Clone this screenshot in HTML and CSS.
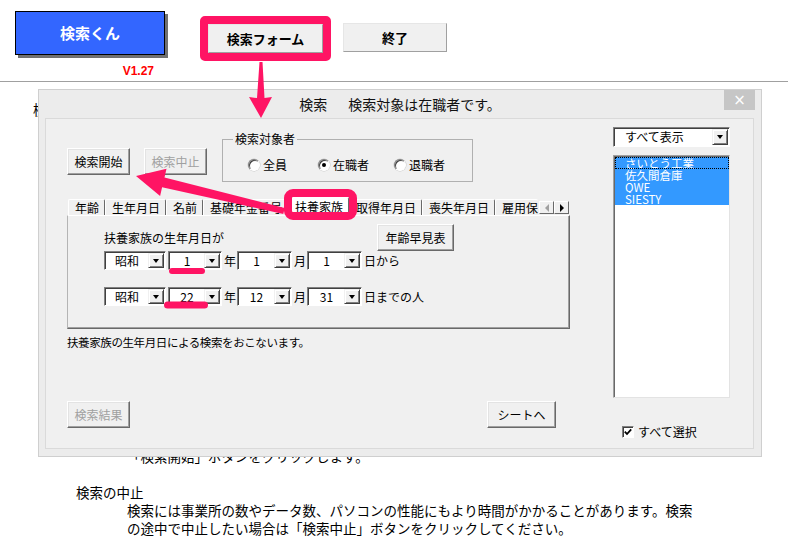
FILE: index.html
```html
<!DOCTYPE html>
<html lang="ja">
<head>
    <meta charset="UTF-8">
    <meta name="viewport" content="width=device-width, initial-scale=1.0">
    <title>検索くん</title>
    <link rel="stylesheet" href="styles.css">
</head>
<body>
    <header class="toolbar">
        <div class="brand">
            <div class="brand-btn">検索くん</div>
            <div class="version">V1.27</div>
        </div>
        <div class="mark-box"><button class="sheet-btn form-btn">検索フォーム</button></div>
        <button class="sheet-btn quit-btn">終了</button>
    </header>
    <hr class="rule">

    <main class="doc">
        <p class="doc-title">検索くんの使い方</p>
        <p class="doc-text doc-start">「検索開始」ボタンをクリックします。</p>
        <section class="doc-sec">
            <p class="doc-head">検索の中止</p>
            <p class="doc-text">検索には事業所の数やデータ数、パソコンの性能にもより時間がかかることがあります。検索<br>の途中で中止したい場合は「検索中止」ボタンをクリックしてください。</p>
        </section>
    </main>

    <div class="dialog">
        <div class="dlg-title">
            <span></span>
            <span class="dlg-caption">検索<span class="dlg-msg">検索対象は在職者です。</span></span>
            <button class="dlg-close">×</button>
        </div>
        <div class="dlg-client">
            <div class="dlg-main">
                <div class="top-row">
                    <button class="btn">検索開始</button>
                    <button class="btn" disabled>検索中止</button>
                    <div class="group">
                        <span class="group-label">検索対象者</span>
                        <label class="radio"><span class="radio-dot"></span>全員</label>
                        <label class="radio"><span class="radio-dot on"></span>在職者</label>
                        <label class="radio"><span class="radio-dot"></span>退職者</label>
                    </div>
                </div>

                <div class="tabs">
                    <div class="tab-list">
                        <span class="tab">年齢</span>
                        <span class="tab">生年月日</span>
                        <span class="tab">名前</span>
                        <span class="tab">基礎年金番号</span>
                        <span class="tab active">扶養家族</span>
                        <span class="tab">取得年月日</span>
                        <span class="tab">喪失年月日</span>
                        <span class="tab last">雇用保</span>
                    </div>
                    <div class="tab-scroll">
                        <span class="scroll-btn"><i class="tri-left"></i></span>
                        <span class="scroll-btn"><i class="tri-right"></i></span>
                    </div>
                </div>

                <div class="tab-panel">
                    <div class="panel-row">
                        <span>扶養家族の生年月日が</span>
                        <button class="btn wide">年齢早見表</button>
                    </div>
                    <div class="date-row">
                        <span class="combo era"><span class="combo-val">昭和</span><span class="combo-btn"></span></span>
                        <span class="combo year"><span class="combo-val">1</span><span class="combo-btn"></span></span>
                        <span class="unit">年</span>
                        <span class="combo"><span class="combo-val">1</span><span class="combo-btn"></span></span>
                        <span class="unit">月</span>
                        <span class="combo"><span class="combo-val">1</span><span class="combo-btn"></span></span>
                        <span class="unit">日から</span>
                    </div>
                    <div class="date-row">
                        <span class="combo era"><span class="combo-val">昭和</span><span class="combo-btn"></span></span>
                        <span class="combo year"><span class="combo-val">22</span><span class="combo-btn"></span></span>
                        <span class="unit">年</span>
                        <span class="combo"><span class="combo-val">12</span><span class="combo-btn"></span></span>
                        <span class="unit">月</span>
                        <span class="combo"><span class="combo-val">31</span><span class="combo-btn"></span></span>
                        <span class="unit">日までの人</span>
                    </div>
                </div>

                <p class="dlg-note">扶養家族の生年月日による検索をおこないます。</p>

                <div class="bottom-row">
                    <button class="btn" disabled>検索結果</button>
                    <button class="btn sheet">シートへ</button>
                </div>
            </div>

            <div class="dlg-side">
                <span class="combo side-combo"><span class="combo-val">すべて表示</span><span class="combo-btn"></span></span>
                <div class="listbox">
                    <div class="list-item focus">さいとう工業</div>
                    <div class="list-item">佐久間倉庫</div>
                    <div class="list-item">QWE</div>
                    <div class="list-item">SIESTY</div>
                </div>
                <label class="check-row">
                    <span class="check"><svg width="8" height="8" viewBox="0 0 8 8"><polyline points="0.8,3.6 3,6 7.2,1.4" fill="none" stroke="#000" stroke-width="1.8"/></svg></span>
                    すべて選択
                </label>
            </div>
        </div>
    </div>

    <!-- 説明用の矢印と枠 -->
    <svg class="marks" width="788" height="538" viewBox="0 0 788 538">
        <polygon points="259.5,62 262.5,62 264.5,98 272,97 261,118 249,97 257,98" fill="#ff1464"/>
        <polygon points="136,176 166.5,168.8 164.5,177.6 284.7,208.1 283.3,213.9 162.1,187.3 160.1,196" fill="#ff1464"/>
        <rect x="288" y="193" width="65" height="23" rx="5" fill="none" stroke="#ff1464" stroke-width="8"/>
        <rect x="169" y="268" width="36" height="6" rx="3" fill="#ff1464"/>
        <rect x="164" y="301.5" width="44" height="7" rx="3.5" fill="#ff1464"/>
    </svg>
</body>
</html>
```

FILE: styles.css
```css
* {
    box-sizing: border-box;
}

body {
    margin: 0;
    width: 788px;
    height: 538px;
    overflow: hidden;
    position: relative;
    background: #fff;
    color: #000;
    font-family: "Noto Sans CJK JP", "Noto Sans", sans-serif;
}

button {
    font-family: inherit;
    padding: 0;
}

/* 上のツールバー */
.toolbar {
    display: flex;
    align-items: flex-start;
    height: 81px;
    padding: 11px 0 0 15px;
}

.brand {
    width: 150px;
    display: flex;
    flex-direction: column;
    align-items: flex-end;
}

.brand-btn {
    width: 150px;
    height: 44px;
    background: #3366ff;
    border: 1px solid #000;
    box-shadow: 3px 3px 0 #707070;
    color: #fff;
    font-size: 15px;
    font-weight: bold;
    line-height: 42px;
    text-align: center;
}

.version {
    margin: 9px 11px 0 0;
    color: #f00;
    font: bold 12px/14px "Liberation Sans", Arial, sans-serif;
}

.mark-box {
    margin: 5px 0 0 35px;
    border: 8px solid #ff1464;
    border-radius: 5px;
}

.sheet-btn {
    height: 29px;
    background: #f0f0f0;
    border: 1px solid;
    border-color: #e6e6e6 #a0a0a0 #a0a0a0 #e6e6e6;
    font-size: 13px;
    font-weight: bold;
    line-height: 1;
    color: #000;
}

.form-btn {
    display: block;
    width: 115px;
}

.quit-btn {
    width: 104px;
    margin: 12px 0 0 12px;
}

.rule {
    margin: 0;
    border: 0;
    border-top: 1px solid #a0a0a0;
}

/* 背面の説明文 */
.doc {
    padding: 18px 0 0 33px;
    font-size: 13.5px;
    line-height: 18px;
}

.doc p {
    margin: 0;
}

.doc-start {
    margin-top: 329px !important;
}

.doc-sec {
    margin-top: 18px;
}

.doc-head {
    padding-left: 43px;
}

.doc-text {
    padding-left: 94px;
    white-space: nowrap;
}

/* ダイアログ */
.dialog {
    position: absolute;
    left: 38px;
    top: 89px;
    width: 724px;
    height: 368px;
    display: flex;
    flex-direction: column;
    background: #ececec;
    border: 1px solid #cfcfcf;
}

.dlg-title {
    height: 28px;
    display: grid;
    grid-template-columns: 1fr auto 1fr;
    align-items: center;
    font-size: 14px;
    line-height: 16px;
    color: #111;
}

.dlg-msg {
    margin-left: 21px;
}

.dlg-close {
    justify-self: end;
    align-self: start;
    width: 31px;
    height: 20px;
    margin-right: 6px;
    background: #c6c6c6;
    border: 0;
    color: #fff;
    font: 15px/20px "DejaVu Sans", sans-serif;
}

.dlg-client {
    flex: 1;
    margin: 0 7px 7px 6px;
    padding: 8px 0 0 21px;
    background: #f0f0f0;
    border: 1px solid #dadada;
    display: grid;
    grid-template-columns: 503px 117px;
    column-gap: 43px;
    align-items: start;
    font-size: 12px;
    line-height: 14px;
}

.btn {
    width: 63px;
    height: 27px;
    background: #f0f0f0;
    border: 1px solid;
    border-color: #fff #696969 #696969 #fff;
    box-shadow: inset -1px -1px #a0a0a0, inset 1px 1px #e3e3e3;
    font-size: 12px;
    line-height: 1;
    color: #000;
}

.btn:disabled {
    color: #a0a0a0;
}

.top-row {
    display: flex;
    align-items: flex-start;
    margin-top: 12px;
}

.top-row .btn {
    margin-top: 9px;
}

.top-row .btn + .btn {
    margin-left: 14px;
}

.group {
    position: relative;
    width: 251px;
    height: 43px;
    margin-left: 15px;
    padding: 8px 0 0 25px;
    border: 1px solid #b0b0b0;
    display: grid;
    grid-template-columns: 70px 76px auto;
    align-items: center;
}

.group-label {
    position: absolute;
    top: -8px;
    left: 10px;
    padding: 0 2px;
    background: #f0f0f0;
}

.radio {
    display: flex;
    align-items: center;
    gap: 3px;
}

.radio-dot {
    position: relative;
    width: 12px;
    height: 12px;
    border-radius: 50%;
    background: #fff;
    border: 1px solid;
    border-color: #808080 #fff #fff #808080;
    box-shadow: inset 1px 1px #404040, 0 0 0 0.5px #c8c8c8;
}

.radio-dot.on::after {
    content: "";
    position: absolute;
    left: 3px;
    top: 3px;
    width: 4px;
    height: 4px;
    border-radius: 50%;
    background: #000;
}

/* タブ */
.tabs {
    display: flex;
    align-items: flex-end;
    height: 18px;
    margin-top: 15px;
}

.tab-list {
    display: flex;
    align-items: flex-end;
    width: 470px;
    height: 18px;
    margin-left: 1px;
    overflow: hidden;
}

.tab {
    flex: none;
    height: 16px;
    padding: 0 5px 0 6px;
    border-top: 1px solid #fff;
    border-left: 1px solid #fff;
    border-right: 1px solid #696969;
    border-radius: 2px 2px 0 0;
    line-height: 15px;
    white-space: nowrap;
}

.tab.last {
    flex: 1;
    border-right: 0;
    overflow: hidden;
}

.tab.active {
    height: 18px;
    line-height: 17px;
    background: #fff;
}

.tab-scroll {
    display: flex;
    margin: 0 0 1px 1px;
}

.scroll-btn {
    width: 15px;
    height: 13px;
    display: flex;
    align-items: center;
    justify-content: center;
    background: #f0f0f0;
    border: 1px solid;
    border-color: #fff #696969 #696969 #fff;
}

.tri-left {
    border-top: 4px solid transparent;
    border-bottom: 4px solid transparent;
    border-right: 4px solid #a0a0a0;
}

.tri-right {
    border-top: 4px solid transparent;
    border-bottom: 4px solid transparent;
    border-left: 4px solid #000;
}

.tab-panel {
    height: 114px;
    padding: 8px 0 0 36px;
    border: 1px solid;
    border-color: #fff #696969 #696969 #b4b4b4;
    box-shadow: inset -1px -1px #a0a0a0;
}

.panel-row {
    display: flex;
    justify-content: space-between;
    align-items: center;
    width: 350px;
}

.panel-row .btn {
    width: 77px;
}

.date-row {
    display: flex;
    align-items: center;
    height: 19px;
}

.date-row + .date-row {
    margin-top: 17px;
}

.combo {
    display: flex;
    width: 55px;
    height: 19px;
    padding: 1px;
    background: #fff;
    border: 1px solid;
    border-color: #808080 #fff #fff #808080;
    box-shadow: inset 1px 1px #404040;
}

.combo.era {
    width: 62px;
}

.combo.year {
    width: 54px;
    margin-left: 2px;
}

.combo-val {
    flex: 1;
    text-align: center;
    line-height: 15px;
    white-space: nowrap;
}

.combo-btn {
    width: 16px;
    height: 15px;
    display: flex;
    align-items: center;
    justify-content: center;
    background: #f0f0f0;
    border: 1px solid;
    border-color: #f0f0f0 #404040 #404040 #f0f0f0;
    box-shadow: inset 1px 1px #fff, inset -1px -1px #808080;
}

.combo-btn::before {
    content: "";
    border-left: 3.5px solid transparent;
    border-right: 3.5px solid transparent;
    border-top: 4px solid #000;
}

.unit {
    margin: 0 1px 0 2px;
    line-height: 19px;
}

.dlg-note {
    margin: 6px 0 0;
    font-size: 11.5px;
    line-height: 14px;
    letter-spacing: -0.4px;
}

.bottom-row {
    display: flex;
    justify-content: space-between;
    width: 489px;
    margin-top: 52px;
}

.btn.sheet {
    width: 69px;
}

/* 右側のリスト */
.side-combo {
    width: 117px;
    height: 20px;
}

.side-combo .combo-val {
    text-align: left;
    padding-left: 10px;
    line-height: 16px;
}

.side-combo .combo-btn {
    height: 16px;
}

.listbox {
    height: 243px;
    margin-top: 8px;
    padding: 1px 0 0 1px;
    background: #fff;
    border: 1px solid;
    border-color: #a0a0a0 #e3e3e3 #e3e3e3 #a0a0a0;
    box-shadow: inset 1px 1px #696969;
}

.list-item {
    height: 12px;
    padding-left: 10px;
    background: #3399ff;
    color: #fff;
    font-size: 11.5px;
    line-height: 12px;
    white-space: nowrap;
    overflow: hidden;
}

.list-item.focus {
    outline: 1px dotted #000;
    outline-offset: -1px;
}

.check-row {
    display: flex;
    align-items: center;
    gap: 4px;
    margin: 27px 0 0 9px;
}

.check {
    width: 12px;
    height: 12px;
    display: flex;
    align-items: center;
    justify-content: center;
    background: #fff;
    border: 1px solid;
    border-color: #808080 #fff #fff #808080;
    box-shadow: inset 1px 1px #404040;
}

.marks {
    position: absolute;
    left: 0;
    top: 0;
    pointer-events: none;
}
```
